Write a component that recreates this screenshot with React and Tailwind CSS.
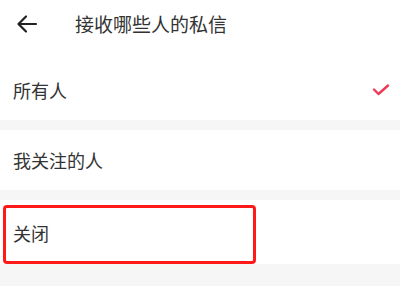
export default function App() {
  const font = { fontFamily: '"Noto Sans CJK SC", "Noto Sans", sans-serif' };
  return (
    <div className="w-[400px] h-[286px] bg-[#f6f6f6] overflow-hidden text-[#333333]" style={font}>
      <div className="h-[60px] bg-white flex items-start pt-[13px]">
        <div className="w-[75px] pl-[16px] flex items-center h-[22px]">
          <svg width="22" height="22" viewBox="0 0 22 22" fill="none" stroke="#222" strokeWidth="2.2" strokeLinecap="round" strokeLinejoin="round">
            <path d="M20 11H3" />
            <path d="M10 3.5L2.5 11L10 18.5" />
          </svg>
        </div>
        <div className="text-[19px] leading-[22px]">接收哪些人的私信</div>
      </div>
      <div className="h-[60px] bg-white flex items-center justify-between pl-[13px] pr-[10px]">
        <span className="text-[18px] leading-none">所有人</span>
        <svg width="18" height="14" viewBox="0 0 18 14" fill="none" stroke="#ee3a5a" strokeWidth="2.4" strokeLinecap="round" strokeLinejoin="round">
          <path d="M2 6.5L6.5 11L16 2.5" />
        </svg>
      </div>
      <div className="h-[10px] bg-[#f6f6f6]" />
      <div className="h-[60px] bg-white flex items-center pl-[13px]">
        <span className="text-[18px] leading-none">我关注的人</span>
      </div>
      <div className="h-[10px] bg-[#f6f6f6]" />
      <div className="relative h-[64px] bg-white flex items-center pl-[13px]">
        <span className="text-[18px] leading-none pt-[1px]">关闭</span>
        <div className="absolute left-[3px] top-[5px] w-[253px] h-[59px] border-[3px] border-[#ff1a1a] rounded-[4px]" />
      </div>
    </div>
  );
}
